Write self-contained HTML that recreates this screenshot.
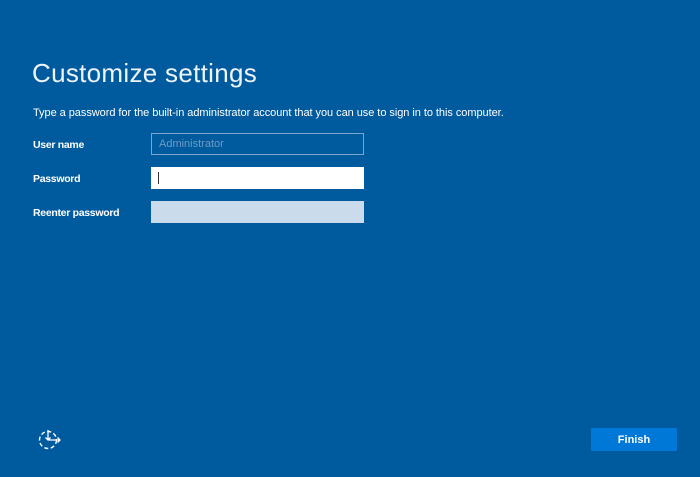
<!DOCTYPE html>
<html><head><style>
body{margin:0;width:700px;height:477px;background:#005a9e;font-family:"Liberation Sans",sans-serif;color:#fff;position:relative;overflow:hidden}
.a{position:absolute}
h1{position:absolute;left:32px;top:58px;margin:0;font-weight:normal;font-size:26px;letter-spacing:0.3px;color:#eef4fa}
.p{left:33px;top:107px;font-size:11px;letter-spacing:-0.05px}
.l{left:33px;font-size:10.5px;font-weight:bold;letter-spacing:-0.3px}
.i{left:151px;width:213px;height:22px;box-sizing:border-box}
</style></head><body>
<h1>Customize settings</h1>
<div class="a p">Type a password for the built-in administrator account that you can use to sign in to this computer.</div>
<div class="a l" style="top:139px">User name</div>
<div class="a l" style="top:173px">Password</div>
<div class="a l" style="top:207px">Reenter password</div>
<div class="a i" style="top:133px;border:1px solid #7aa6cc;color:#6f9bc4;font-size:11px;padding:4px 7px">Administrator</div>
<div class="a i" style="top:167px;background:#fff"><div class="a" style="left:7px;top:5px;width:1px;height:12px;background:#333"></div></div>
<div class="a i" style="top:201px;background:#cadcec"></div>
<svg class="a" style="left:36px;top:427px" width="28" height="26" viewBox="0 0 28 26">
<circle cx="12" cy="13" r="8.5" fill="none" stroke="#fff" stroke-width="1.4" stroke-dasharray="4 2.5"/>
<path d="M12 3v10M9.5 10.5L12 13l2.5-2.5M12 13h12M21.5 10.5L24 13l-2.5 2.5" fill="none" stroke="#fff" stroke-width="1.3"/>
</svg>
<div class="a" style="left:591px;top:428px;width:86px;height:23px;background:#0078d7;font-size:11px;font-weight:bold;text-align:center;line-height:25px">Finish</div>
</body></html>
